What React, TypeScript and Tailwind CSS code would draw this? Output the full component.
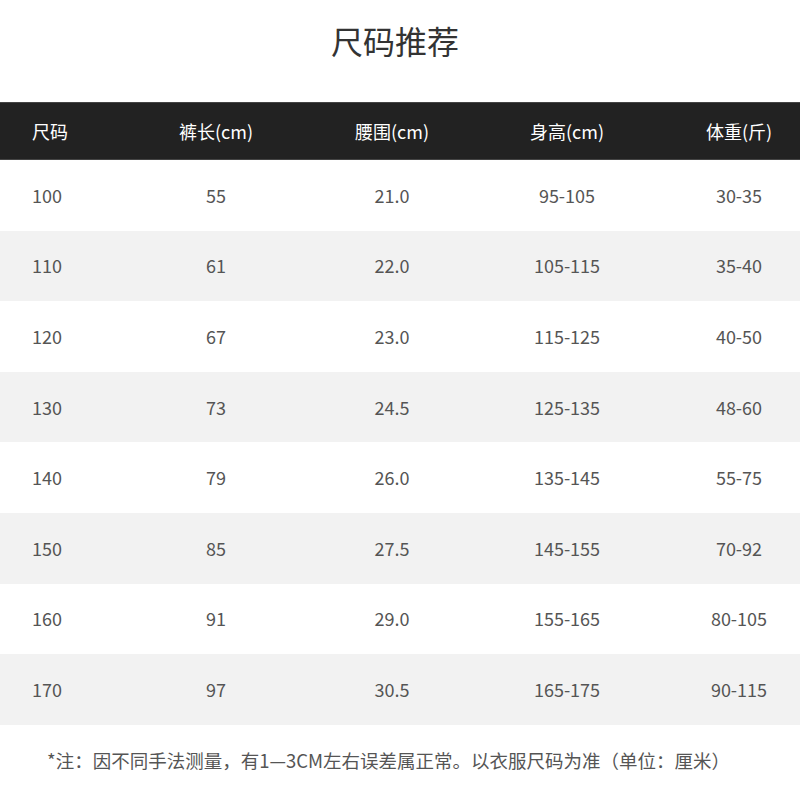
import React from 'react';

const rows = [
  ['100', '55', '21.0', '95-105', '30-35'],
  ['110', '61', '22.0', '105-115', '35-40'],
  ['120', '67', '23.0', '115-125', '40-50'],
  ['130', '73', '24.5', '125-135', '48-60'],
  ['140', '79', '26.0', '135-145', '55-75'],
  ['150', '85', '27.5', '145-155', '70-92'],
  ['160', '91', '29.0', '155-165', '80-105'],
  ['170', '97', '30.5', '165-175', '90-115'],
];

const Row: React.FC<{ cells: string[]; className: string }> = ({ cells, className }) => (
  <div className={`flex items-center ${className}`}>
    <div className="w-[130px] pl-[32px]">{cells[0]}</div>
    <div className="w-[172px] text-center">{cells[1]}</div>
    <div className="w-[180px] text-center">{cells[2]}</div>
    <div className="w-[170px] text-center">{cells[3]}</div>
    <div className="flex-1 pl-[26px] text-center">{cells[4]}</div>
  </div>
);

const App: React.FC = () => {
  return (
    <div
      className="w-[800px] h-[800px] bg-white text-[#555]"
      style={{ fontFamily: '"Noto Sans CJK SC", "Noto Sans", sans-serif' }}
    >
      <div className="h-[102px] flex items-center justify-center pb-[22px] pr-[10px]">
        <h1 className="text-[32px] leading-none text-[#333] font-normal">尺码推荐</h1>
      </div>
      <Row
        cells={['尺码', '裤长(cm)', '腰围(cm)', '身高(cm)', '体重(斤)']}
        className="h-[58px] bg-[#222] text-white text-[18px] border-y border-[#444]"
      />
      {rows.map((r, i) => (
        <Row
          key={r[0]}
          cells={r}
          className={`h-[70.6px] text-[18px] ${i % 2 === 1 ? 'bg-[#f2f2f2]' : 'bg-white'}`}
        />
      ))}
      <p className="mt-[26px] pl-[47px] text-[18.5px] text-[#555] leading-none whitespace-nowrap">
        *注：因不同手法测量，有1—3CM左右误差属正常。以衣服尺码为准（单位：厘米）
      </p>
    </div>
  );
};

export default App;
